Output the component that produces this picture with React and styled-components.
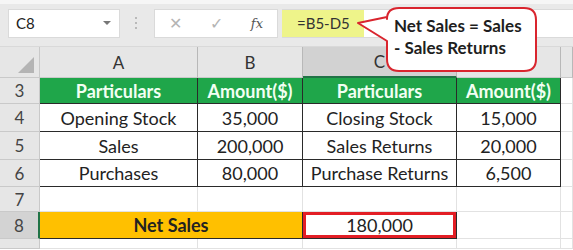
import styled, { createGlobalStyle } from "styled-components";

/* Page reset */
const GlobalStyle = createGlobalStyle`
    body {
        margin: 0;
        background: #ffffff;
        font-family: "Lato", "Liberation Sans", sans-serif;
    }
`;

/* Whole picture */
const Screen = styled.div`
    position: relative;
    width: 573px;
    height: 250px;
    overflow: hidden;
    background: #ffffff;
`;

/* Formula bar strip at the top */
const Toolbar = styled.div`
    display: flex;
    align-items: center;
    height: 47px;
    padding: 0 0 0 8px;
    box-sizing: border-box;
    background: linear-gradient(#f6f6f6 0, #f6f6f6 4px, #e9e9e9 4px);
    border-bottom: 1px solid #d9d9d9;
`;

/* Cell reference box */
const NameBox = styled.div`
    display: flex;
    align-items: center;
    justify-content: space-between;
    width: 112px;
    height: 29px;
    padding: 0 8px 0 7px;
    box-sizing: border-box;
    background: #ffffff;
    border: 1px solid #dadada;
    font-size: 15px;
    color: #222;
`;

/* Small dropdown triangle */
const Caret = styled.span`
    width: 0;
    height: 0;
    border-left: 4px solid transparent;
    border-right: 4px solid transparent;
    border-top: 4px solid #777;
`;

/* Vertical dots between name box and formula */
const Grip = styled.div`
    display: flex;
    flex-direction: column;
    gap: 3px;
    margin: 0 17px 0 15px;
    span {
        width: 2px;
        height: 2px;
        background: #b9b9b9;
    }
`;

/* Cancel / enter / fx buttons */
const FxBox = styled.div`
    display: flex;
    align-items: center;
    justify-content: space-around;
    width: 124px;
    height: 29px;
    background: #ffffff;
    border: 1px solid #dadada;
    box-sizing: border-box;
    color: #b4b4b4;
    font-size: 16px;
`;

const Fx = styled.span`
    font-family: "DejaVu Serif", "Liberation Serif", serif;
    font-style: italic;
    font-size: 13px;
    color: #555;
`;

/* Formula text field */
const FormulaField = styled.div`
    flex: 1;
    display: flex;
    align-items: stretch;
    height: 29px;
    margin-left: 4px;
    background: #ffffff;
    border-top: 1px solid #dadada;
    border-bottom: 1px solid #dadada;
    box-sizing: border-box;
`;

const FormulaHighlight = styled.div`
    display: flex;
    align-items: center;
    padding: 0 14px 0 15px;
    background: #eef48a;
    font-size: 15px;
    color: #333;
`;

/* Spreadsheet grid */
const Grid = styled.div`
    display: grid;
    grid-template-columns: 40px 158px 105px 154px 104px 12px;
    grid-template-rows: 31px 26px 28px 28px 27px 25px 27px 10px;
`;

/* Top-left corner with the select-all triangle */
const Corner = styled.div`
    position: relative;
    background: #e6e6e6;
    border-right: 1px solid #c9c9c9;
    border-bottom: 1px solid #c9c9c9;
    &::after {
        content: "";
        position: absolute;
        right: 5px;
        bottom: 4px;
        border-left: 16px solid transparent;
        border-bottom: 16px solid #b4b4b4;
    }
`;

/* Column letter header */
const ColHead = styled.div`
    display: flex;
    align-items: center;
    justify-content: center;
    background: ${(p) => (p.$active ? "#d2d2d2" : "#e6e6e6")};
    border-right: 1px solid #b8b8b8;
    border-bottom: ${(p) => (p.$active ? "2px solid #217346" : "1px solid #c9c9c9")};
    font-size: 17px;
    color: #333;
`;

/* Row number header */
const RowHead = styled.div`
    display: flex;
    align-items: center;
    justify-content: center;
    background: ${(p) => (p.$active ? "#d3d3d3" : "#e6e6e6")};
    border-right: ${(p) => (p.$active ? "2px solid #217346" : "1px solid #c9c9c9")};
    border-bottom: 1px solid #c9c9c9;
    font-size: 17px;
    color: #444;
`;

/* Worksheet cell */
const Cell = styled.div`
    display: flex;
    align-items: center;
    justify-content: center;
    grid-column: ${(p) => (p.$span ? `span ${p.$span}` : "auto")};
    background: ${(p) => p.$fill || "#ffffff"};
    border-right: 1px solid ${(p) => (p.$table ? "#2a2a2a" : "#e2e2e2")};
    border-bottom: 1px solid ${(p) => (p.$table ? "#2a2a2a" : "#e2e2e2")};
    font-size: 18px;
    font-weight: ${(p) => (p.$bold ? 700 : 400)};
    color: ${(p) => p.$color || "#222"};
    white-space: nowrap;
`;

/* Active cell C8 with red outline */
const ResultCell = styled(Cell)`
    box-shadow: inset 0 0 0 3px #e31e25;
    border-right: 1px solid #2a2a2a;
    border-bottom: 1px solid #2a2a2a;
`;

/* Speech bubble over the sheet */
const Callout = styled.div`
    position: absolute;
    left: 355px;
    top: 5px;
    width: 184px;
    height: 70px;
`;

const CalloutText = styled.div`
    position: absolute;
    left: 39px;
    top: 10px;
    font-family: "Lato", "Liberation Sans", sans-serif;
    font-weight: 700;
    font-size: 17px;
    line-height: 22px;
    color: #1e1e1e;
`;

const HEAD = "#1fa64a";

const rows = [
    ["Opening Stock", "35,000", "Closing Stock", "15,000"],
    ["Sales", "200,000", "Sales Returns", "20,000"],
    ["Purchases", "80,000", "Purchase Returns", "6,500"],
];

const App = () => {
    return (
        <Screen>
            <GlobalStyle />
            <Toolbar>
                <NameBox>C8<Caret /></NameBox>
                <Grip><span /><span /><span /></Grip>
                <FxBox>
                    <span>✕</span>
                    <span>✓</span>
                    <Fx>fx</Fx>
                </FxBox>
                <FormulaField>
                    <FormulaHighlight>=B5-D5</FormulaHighlight>
                </FormulaField>
            </Toolbar>
            <Grid>
                <Corner />
                <ColHead>A</ColHead>
                <ColHead>B</ColHead>
                <ColHead $active>C</ColHead>
                <ColHead>D</ColHead>
                <ColHead />

                <RowHead>3</RowHead>
                <Cell $table $fill={HEAD} $bold $color="#f2fff2">Particulars</Cell>
                <Cell $table $fill={HEAD} $bold $color="#f2fff2">Amount($)</Cell>
                <Cell $table $fill={HEAD} $bold $color="#f2fff2">Particulars</Cell>
                <Cell $table $fill={HEAD} $bold $color="#f2fff2">Amount($)</Cell>
                <Cell />

                {rows.map((r, i) => (
                    <>
                        <RowHead key={`h${i}`}>{i + 4}</RowHead>
                        {r.map((v, j) => (
                            <Cell key={`${i}-${j}`} $table>{v}</Cell>
                        ))}
                        <Cell key={`e${i}`} />
                    </>
                ))}

                <RowHead>7</RowHead>
                <Cell />
                <Cell />
                <Cell />
                <Cell />
                <Cell />

                <RowHead $active>8</RowHead>
                <Cell $span={2} $table $fill="#ffc000" $bold>Net Sales</Cell>
                <ResultCell>180,000</ResultCell>
                <Cell />
                <Cell />

                <RowHead />
                <Cell />
                <Cell />
                <Cell />
                <Cell />
                <Cell />
            </Grid>
            <Callout>
                <svg width="184" height="70" viewBox="0 0 184 70">
                    <path
                        d="M3 18 L32 12 L32 14 Q32 3 44 3 L169 3 Q181 3 181 15 L181 54 Q181 66 169 66 L44 66 Q32 66 32 54 L32 36 Z"
                        fill="#ffffff"
                        stroke="#d9252e"
                        strokeWidth="2"
                        strokeLinejoin="round"
                    />
                </svg>
                <CalloutText>
                    Net Sales = Sales
                    <br />- Sales Returns
                </CalloutText>
            </Callout>
        </Screen>
    );
};

export default App;
